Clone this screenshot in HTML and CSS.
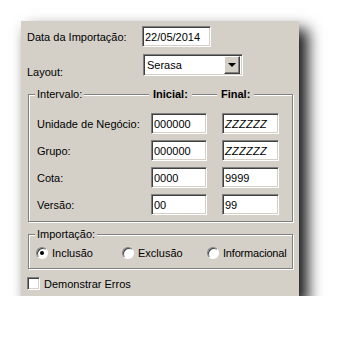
FILE: index.html
```html
<!DOCTYPE html>
<html lang="pt-BR">
<head>
    <meta charset="UTF-8">
    <title>Importação</title>
    <link rel="stylesheet" href="styles.css">
</head>
<body>
    <div class="janela">
        <div class="linha linha-data">
            <span class="rotulo">Data da Importação:</span>
            <span class="campo campo-data">22/05/2014</span>
        </div>
        <div class="linha linha-layout">
            <span class="rotulo rotulo-baixo">Layout:</span>
            <div class="combo">
                <span class="combo-texto">Serasa</span>
                <span class="combo-botao"><span class="seta"></span></span>
            </div>
        </div>

        <div class="grupo grupo-intervalo">
            <div class="grupo-titulo">
                <div class="titulo-cel cel-1"><span class="titulo-texto">Intervalo:</span></div>
                <div class="titulo-cel cel-2"><span class="titulo-texto negrito">Inicial:</span></div>
                <div class="titulo-cel cel-3"><span class="titulo-texto negrito">Final:</span></div>
            </div>
            <div class="faixas">
                <div class="faixa">
                    <span class="faixa-rotulo">Unidade de Negócio:</span>
                    <span class="campo campo-ini">000000</span>
                    <span class="campo campo-fim italico">ZZZZZZ</span>
                </div>
                <div class="faixa">
                    <span class="faixa-rotulo">Grupo:</span>
                    <span class="campo campo-ini">000000</span>
                    <span class="campo campo-fim italico">ZZZZZZ</span>
                </div>
                <div class="faixa">
                    <span class="faixa-rotulo">Cota:</span>
                    <span class="campo campo-ini">0000</span>
                    <span class="campo campo-fim">9999</span>
                </div>
                <div class="faixa">
                    <span class="faixa-rotulo">Versão:</span>
                    <span class="campo campo-ini">00</span>
                    <span class="campo campo-fim">99</span>
                </div>
            </div>
        </div>

        <div class="grupo grupo-importacao">
            <div class="grupo-titulo">
                <div class="titulo-cel cel-1"><span class="titulo-texto">Importação:</span></div>
            </div>
            <div class="opcoes">
                <label class="opcao opcao-1"><span class="radio marcado"></span>Inclusão</label>
                <label class="opcao opcao-2"><span class="radio"></span>Exclusão</label>
                <label class="opcao opcao-3"><span class="radio"></span>Informacional</label>
            </div>
        </div>

        <label class="check-linha"><span class="check"></span>Demonstrar Erros</label>
    </div>
</body>
</html>
```

FILE: styles.css
```css
/* Reset */
* {
    margin: 0;
    padding: 0;
    box-sizing: border-box;
}

body {
    background: #fff;
    font-family: 'Liberation Sans', Arial, sans-serif;
    font-size: 11px;
    color: #000;
}

/* Janela */
.janela {
    margin: 21px 0 0 21px;
    width: 278px;
    height: 275px;
    background: #d4d0c8;
    padding: 5px 6px 0 6px;
    box-shadow: 8px 9px 14px 1px rgba(0, 0, 0, 0.9);
}

.linha {
    display: flex;
    align-items: center;
    height: 21px;
}

.linha-layout {
    margin-top: 7px;
    height: 22px;
}

.rotulo {
    width: 115px;
}

.rotulo-baixo {
    align-self: flex-end;
    position: relative;
    top: 2px;
}

/* Campos com borda afundada */
.campo {
    display: flex;
    align-items: center;
    height: 21px;
    background: #fff;
    padding-left: 2px;
    border-top: 1px solid #808080;
    border-left: 1px solid #808080;
    border-bottom: 1px solid #fff;
    border-right: 1px solid #fff;
    box-shadow: inset 1px 1px 0 #404040, inset -1px -1px 0 #d4d0c8;
}

.campo-data {
    width: 69px;
}

.italico {
    font-style: italic;
    letter-spacing: 0.3px;
}

/* Combo */
.combo {
    display: flex;
    align-items: center;
    width: 100px;
    height: 22px;
    margin-left: 1px;
    background: #fff;
    padding: 2px 2px 2px 3px;
    border-top: 1px solid #808080;
    border-left: 1px solid #808080;
    border-bottom: 1px solid #fff;
    border-right: 1px solid #fff;
    box-shadow: inset 1px 1px 0 #404040, inset -1px -1px 0 #d4d0c8;
}

.combo-texto {
    flex: 1;
}

.combo-botao {
    display: flex;
    align-items: center;
    justify-content: center;
    width: 16px;
    height: 18px;
    background: #d4d0c8;
    border-top: 1px solid #fff;
    border-left: 1px solid #fff;
    border-right: 1px solid #404040;
    border-bottom: 1px solid #404040;
    box-shadow: inset -1px -1px 0 #808080;
}

.seta {
    width: 0;
    height: 0;
    border-left: 4px solid transparent;
    border-right: 4px solid transparent;
    border-top: 4px solid #000;
}

/* Grupos */
.grupo {
    margin-left: 1px;
    width: 265px;
    border: 1px solid #808080;
    box-shadow: 1px 1px 0 #fff, inset 1px 1px 0 #fff;
}

.grupo-intervalo {
    margin-top: 18px;
    height: 128px;
}

.grupo-importacao {
    margin-top: 12px;
    height: 35px;
}

.grupo-titulo {
    display: flex;
    height: 13px;
    line-height: 13px;
    margin-top: -7px;
}

.titulo-cel {
    flex: none;
}

.cel-1 {
    width: 120px;
    padding-left: 6px;
}

.cel-2 {
    width: 68px;
}

.titulo-texto {
    background: #d4d0c8;
    padding: 0 2px;
}

.negrito {
    font-weight: bold;
    padding: 0 4px;
}

.faixas {
    display: flex;
    flex-direction: column;
    gap: 6px;
    margin-top: 12px;
    padding-left: 8px;
}

.faixa {
    display: flex;
    align-items: center;
}

.faixa-rotulo {
    width: 114px;
}

.campo-ini {
    width: 56px;
}

.campo-fim {
    width: 57px;
    margin-left: 15px;
}

/* Opções de importação */
.opcoes {
    display: flex;
    align-items: center;
    margin-top: 5px;
    padding-left: 7px;
    height: 13px;
}

.opcao {
    display: flex;
    align-items: center;
    gap: 4px;
    flex: none;
}

.opcao-1 {
    width: 86px;
}

.opcao-2 {
    width: 85px;
}

.opcao-3 {
    letter-spacing: -0.2px;
}

.radio {
    position: relative;
    width: 12px;
    height: 12px;
    border-radius: 50%;
    background: #fff;
    border-top: 1px solid #808080;
    border-left: 1px solid #808080;
    border-right: 1px solid #fff;
    border-bottom: 1px solid #fff;
    box-shadow: inset 1px 1px 0 #404040;
}

.radio.marcado::after {
    content: '';
    position: absolute;
    left: 3px;
    top: 3px;
    width: 4px;
    height: 4px;
    border-radius: 50%;
    background: #000;
}

/* Checkbox */
.check-linha {
    display: flex;
    align-items: center;
    gap: 4px;
    margin-top: 8px;
    height: 13px;
}

.check {
    width: 13px;
    height: 13px;
    background: #fff;
    border-top: 1px solid #808080;
    border-left: 1px solid #808080;
    border-right: 1px solid #fff;
    border-bottom: 1px solid #fff;
    box-shadow: inset 1px 1px 0 #404040, inset -1px -1px 0 #d4d0c8;
}
```
